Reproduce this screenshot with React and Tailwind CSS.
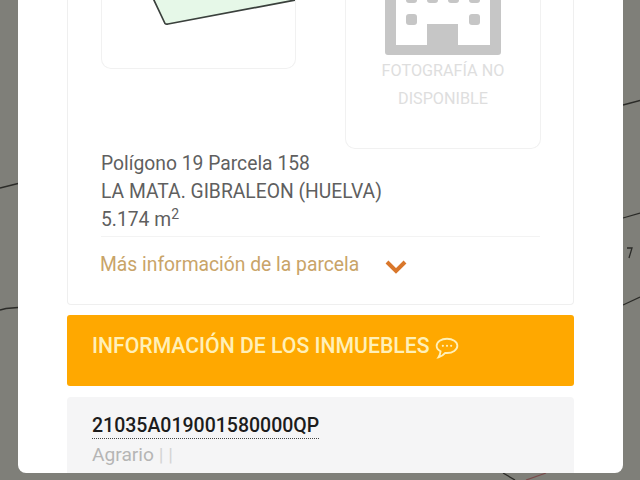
import React from 'react';

const font = { fontFamily: 'Roboto, sans-serif' };

const MapLines = () => (
  <svg className="absolute inset-0" width="640" height="480" viewBox="0 0 640 480" fill="none" stroke="#2b2b28" strokeWidth="1.3">
    <path d="M0 188 L18 183.500" />
    <path d="M0 310 L6 308.500 L18 307.500" />
    <path d="M623 105 L640 100.500" />
    <path d="M623 218 L640 213" />
    <path d="M623 305 L640 297" />
    <path d="M627 248 L632 248 L629 258" />
    <path d="M503 473 L515 480" />
    <path d="M526 480 L546 473" stroke="#7a4a4a" />
  </svg>
);

const BuildingIcon = () => (
  <svg width="116" height="56" viewBox="0 0 116 56" className="block">
    <path fillRule="evenodd" fill="#c6c6c6" d="M0 0H116V52a3 3 0 0 1-3 3H3a3 3 0 0 1-3-3V0ZM11 0V45H42V24H73V45H105V0Z" />
    <rect x="21" y="14" width="11" height="11" rx="3" fill="#c6c6c6" />
    <rect x="84" y="14" width="11" height="11" rx="3" fill="#c6c6c6" />
    <rect x="21" y="-8" width="11" height="11" rx="3" fill="#c6c6c6" />
    <rect x="42" y="-8" width="11" height="11" rx="3" fill="#c6c6c6" />
    <rect x="63" y="-8" width="11" height="11" rx="3" fill="#c6c6c6" />
    <rect x="84" y="-8" width="11" height="11" rx="3" fill="#c6c6c6" />
  </svg>
);

const ParcelShape = () => (
  <svg width="193" height="30" viewBox="0 0 193 30" className="block">
    <path d="M50 -4 L63 23.500 Q64 24.500 66 24 L196 -0.500 L196 -4 Z" fill="#e6f8e8" stroke="#3a403c" strokeWidth="1.700" strokeLinejoin="round" />
  </svg>
);

const ChatIcon = () => (
  <svg width="24" height="22" viewBox="0 0 22 20" fill="none" stroke="#fff0b8" strokeWidth="1.700">
    <path d="M11 1.500C5.800 1.500 1.500 4.300 1.500 8c0 2.200 1.500 4 3.600 5.100C4.900 15 4.200 17 3.200 18.500c2.600-.7 4.800-2.300 6.200-4 .5.100 1 .100 1.600.100 5.200 0 9.500-3 9.500-6.600S16.200 1.500 11 1.500Z" />
    <circle cx="7.200" cy="8" r="1" fill="#fff0b8" stroke="none" />
    <circle cx="11" cy="8" r="1" fill="#fff0b8" stroke="none" />
    <circle cx="14.800" cy="8" r="1" fill="#fff0b8" stroke="none" />
  </svg>
);

export default function App() {
  return (
    <div className="relative w-[640px] h-[480px] overflow-hidden bg-[#7f7f79]" style={font}>
      <MapLines />
      <div className="relative mx-[18px] w-[605px] h-[473px] overflow-hidden bg-white rounded-b-[8px] px-[49px]">
        <div className="h-[305px] bg-white border border-[#efefef] border-t-0 rounded-b-[4px] px-[33px]">
          <div className="flex justify-between h-[149px]">
            <div className="w-[195px] h-[69px] border border-[#f1f1f1] border-t-0 rounded-b-[10px]">
              <ParcelShape />
            </div>
            <div className="w-[196px] h-[149px] -mr-[1px] border border-[#f1f1f1] border-t-0 rounded-b-[10px] flex flex-col items-center">
              <BuildingIcon />
              <p className="mt-[1px] text-[16.200px] leading-[28px] text-[#dedede] text-center">FOTOGRAFÍA NO<br />DISPONIBLE</p>
            </div>
          </div>
          <div className="mt-[1px] text-[19.300px] leading-[28px] text-[#5f5f5f]">
            <p>Polígono 19 Parcela 158</p>
            <p>LA MATA. GIBRALEON (HUELVA)</p>
            <p>5.174 m<sup className="text-[14px] leading-none">2</sup></p>
          </div>
          <div className="mt-[2px] border-t border-[#f3f3f3] flex items-center h-[57px]">
            <span className="text-[19.300px] text-[#c9a468] -ml-[1px]">Más información de la parcela</span>
            <svg className="ml-[26px] mt-[2px]" width="22" height="15" viewBox="0 0 22 15" fill="none" stroke="#d9772b" strokeWidth="4">
              <path d="M2 3 L11 12 L20 3" />
            </svg>
          </div>
        </div>
        <div className="mt-[10px] h-[71px] bg-[#ffa800] rounded-[3px] pl-[25px] flex items-start pt-[18px] gap-[5px]">
          <span className="text-[21.200px] leading-[26px] font-medium text-[#fff0b8]">INFORMACIÓN DE LOS INMUEBLES</span>
          <span className="mt-[4px]"><ChatIcon /></span>
        </div>
        <div className="mt-[11px] h-[90px] bg-[#f5f5f6] rounded-t-[4px] pl-[25px] pt-[17px]">
          <p className="inline-block text-[19.500px] leading-[24px] font-medium text-[#1c1c1c] border-b border-dotted border-[#444]">21035A019001580000QP</p>
          <p className="mt-[2px] text-[19.200px] leading-[28px] text-[#b5b5b5]">Agrario <span className="text-[#d4d4d4]">| |</span></p>
        </div>
      </div>
    </div>
  );
}
